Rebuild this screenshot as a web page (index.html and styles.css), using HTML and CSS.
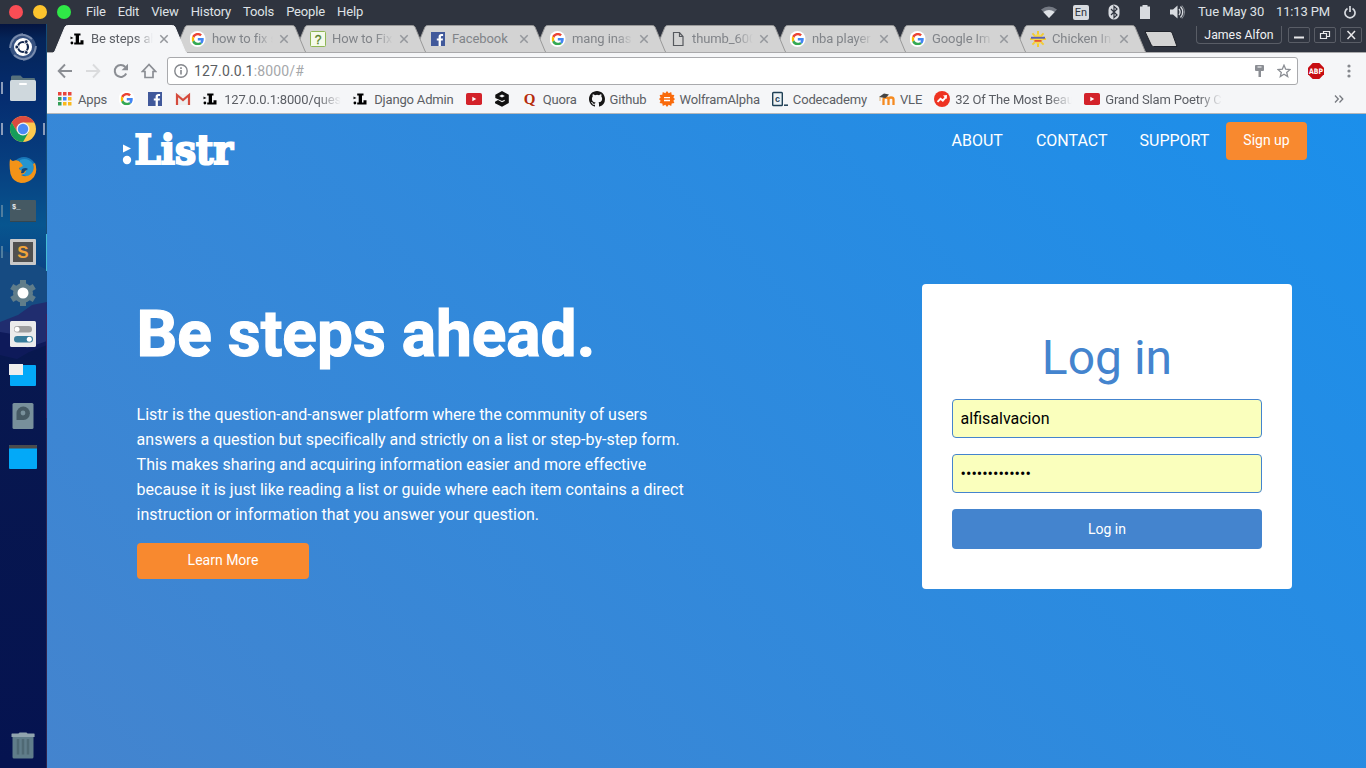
FILE: index.html
```html
<!DOCTYPE html>
<html lang="en">
<head>
<meta charset="utf-8">
<title>Be steps ahead</title>
<link rel="stylesheet" href="styles.css">
</head>
<body>
<svg class="defs" width="0" height="0">
  <symbol id="google" viewBox="0 0 48 48">
    <path fill="#EA4335" d="M24 9.5c3.54 0 6.71 1.22 9.21 3.6l6.85-6.85C35.9 2.38 30.47 0 24 0 14.62 0 6.51 5.38 2.56 13.22l7.98 6.19C12.43 13.72 17.74 9.5 24 9.5z"/>
    <path fill="#4285F4" d="M46.98 24.55c0-1.57-.15-3.09-.38-4.55H24v9.02h12.94c-.58 2.96-2.26 5.48-4.78 7.18l7.73 6c4.51-4.18 7.09-10.36 7.09-17.65z"/>
    <path fill="#FBBC05" d="M10.53 28.59c-.48-1.45-.76-2.99-.76-4.59s.27-3.14.76-4.59l-7.98-6.19C.92 16.46 0 20.12 0 24s.92 7.54 2.56 10.78l7.97-6.19z"/>
    <path fill="#34A853" d="M24 48c6.48 0 11.93-2.13 15.89-5.81l-7.73-6c-2.15 1.45-4.92 2.3-8.16 2.3-6.26 0-11.57-4.22-13.47-9.91l-7.98 6.19C6.51 42.62 14.62 48 24 48z"/>
  </symbol>
  <symbol id="googletab" viewBox="0 0 16 16"><circle cx="7.500" cy="8" r="8" fill="#fff"/><use href="#google" x="1.600" y="1.900" width="12.400" height="12.400"/></symbol>
  <symbol id="fb" viewBox="0 0 16 16"><rect x="1" y="1" width="14" height="14" fill="#41599b"/><path d="M8.600 15V9.600H6.800V7.500h1.800V5.900c0-2 1.100-2.900 2.800-2.900h1.700v2h-1.100c-.9 0-1.100.4-1.100 1.100v1.400h2.100l-.3 2.100h-1.800V15z" fill="#fff"/></symbol>
  <symbol id="lfav" viewBox="0 0 16 16"><path d="M.5 5.600l3 1.300-3 1.300z" fill="#111"/><circle cx="1.900" cy="12" r="1.400"/><path d="M4.200 2.500h6.300v2H9v7h1.500V9.300h3V13.500H4.200v-2h1.500v-7H4.200z"/></symbol>
  <symbol id="yt" viewBox="0 0 16 16"><rect x="0" y="2" width="16" height="12" rx="1.800" fill="#d3222a"/><path d="M6.300 5.800v4.400L10.300 8z" fill="#fff"/></symbol>
  <symbol id="tabshape" viewBox="0 0 134 28"><path d="M0 28C1 27.500 1.500 27 2 26L12 2Q12.800.5 14.500.5H119.500Q121.200.5 122 2L132 26Q132.700 27.500 134 28" stroke-width="1"/></symbol>
  <symbol id="close" viewBox="0 0 10 10"><path d="M1.300 1.300l7.400 7.400M8.700 1.300L1.300 8.700" stroke="#94979c" stroke-width="1.500" fill="none"/></symbol>
  <symbol id="sun" viewBox="0 0 16 16"><path d="M8 0v16M0 8h16M2.400 2.400l11.200 11.200M13.600 2.400L2.400 13.600" stroke="#f2cb35" stroke-width="2"/><circle cx="8" cy="8" r="4.800" fill="#f8d94a"/><rect x="1" y="5.800" width="14" height="1.900" fill="#5a5fb4"/><rect x="4.500" y="9" width="7" height="1.800" fill="#e35439"/></symbol>
</svg>

<header class="panel">
  <i class="dot red"></i><i class="dot yellow"></i><i class="dot green"></i>
  <nav class="menus"><span>File</span><span>Edit</span><span>View</span><span>History</span><span>Tools</span><span>People</span><span>Help</span></nav>
  <div class="tray">
    <svg class="wifi" width="16" height="12" viewBox="0 0 16 12"><path d="M0 3.500Q8-2.500 16 3.500L8 12z" fill="#747983"/><path d="M2.300 6Q8 2 13.700 6L8 12z" fill="#dfe2e6"/></svg>
    <span class="lang">En</span>
    <svg class="bt" width="12" height="16" viewBox="0 0 12 16"><rect x=".5" y=".5" width="11" height="15" rx="5.500" fill="#d8dbe0"/><path d="M3 5l6 6-3 2.700V2.300L9 5l-6 6" fill="none" stroke="#2f343f" stroke-width="1.200"/></svg>
    <svg class="bat" width="10" height="14" viewBox="0 0 10 14"><path d="M2.500 0h5v1.500H10V14H0V1.500h2.500z" fill="#d8dbe0"/></svg>
    <svg class="vol" width="16" height="14" viewBox="0 0 16 14"><path d="M0 4.500h3L7.500.5v13L3 9.500H0z" fill="#d8dbe0"/><path d="M9 4q2.200 3 0 6M10.500 1.500q4.500 5.500 0 11" fill="none" stroke="#d8dbe0" stroke-width="1.300"/><path d="M12 .5q5 6.500 0 13" fill="none" stroke="#878b93"/></svg>
    <span class="date">Tue May 30</span><span class="time">11:13 PM</span>
    <svg class="power" width="12" height="13" viewBox="0 0 12 13"><path d="M3.500 2.500a5 5 0 1 0 5 0M6 0v6" fill="none" stroke="#d8dbe0" stroke-width="1.700"/></svg>
  </div>
</header>

<div class="desktop">
  <aside class="launcher">
    <svg class="wallpaper" width="47" height="744" viewBox="0 0 47 744">
      <defs><linearGradient id="sky" x2="0" y2="1"><stop offset="0" stop-color="#041440"/><stop offset=".02" stop-color="#052458"/><stop offset=".1" stop-color="#052d70"/><stop offset=".19" stop-color="#073f80"/><stop offset=".27" stop-color="#07558f"/><stop offset=".34" stop-color="#0b4183"/><stop offset="1" stop-color="#0a2a6c"/></linearGradient>
      <linearGradient id="hill" x2="0" y2="1"><stop offset="0" stop-color="#08184f"/><stop offset="1" stop-color="#051350"/></linearGradient></defs>
      <path d="M0 0h47v744H0z" fill="url(#sky)"/>
      <path d="M0 226l20 5 27 15v60H0z" fill="#164b82"/>
      <path d="M0 298l18-7 14-10 15-3v60H0z" fill="#202d6f"/>
      <path d="M0 308l12 2 15 14 20-7v50H0z" fill="#0e1a5a"/>
      <path d="M0 331l17 4 12-7 18-7v423H0z" fill="url(#hill)"/>
      <path d="M46.500 0v210" stroke="#164d78"/><path d="M46.500 210v37" stroke="#45bdd4"/><path d="M46.500 290v104" stroke="#41205b"/><path d="M46.500 394v350" stroke="#2d234f"/>
    </svg>
    <div class="dock">
      <div class="app"><svg width="30" height="30" viewBox="0 0 30 30"><circle cx="15" cy="15" r="13" fill="#58719b" opacity=".6"/><path d="M2 16Q3 4 15 2M28 14q-1 12-13 14M6 6Q14-1 24 7M24 24q-8 7-18-1" stroke="#a6b4cd" stroke-width="2" fill="none" opacity=".6"/><circle cx="15" cy="15" r="9" fill="#fff"/><circle cx="15" cy="15" r="5" fill="none" stroke="#14284f" stroke-width="2.200"/><g fill="#14284f" stroke="#fff" stroke-width=".8"><circle cx="8.800" cy="15" r="1.900"/><circle cx="18.200" cy="9.600" r="1.900"/><circle cx="18.200" cy="20.400" r="1.900"/></g></svg></div>
      <div class="app run"><svg width="28" height="28" viewBox="0 0 28 28"><path d="M2 12V3q0-1.500 1.500-1.500h8L14 4h11q1 0 1 1v7z" fill="#57717c"/><rect x="1" y="6" width="26" height="21" rx="1.500" fill="#cfd8dd"/><rect x="10" y="9" width="8" height="2" rx="1" fill="#fff"/></svg></div>
      <div class="app run focus"><svg width="28" height="28" viewBox="0 0 28 28"><circle cx="14" cy="14" r="13" fill="#fcc94f"/><path d="M2.740 7.500A13 13 0 0 1 25.260 7.500H14L8.400 17.200z" fill="#db4b3f"/><path d="M2.740 7.500A13 13 0 0 0 14 27l5.600-9.700H8.400z" fill="#169d5a"/><circle cx="14" cy="14" r="6.500" fill="#f1f1f1"/><circle cx="14" cy="14" r="5.200" fill="#4c8af4"/></svg></div>
      <div class="app"><svg width="28" height="28" viewBox="0 0 28 28"><circle cx="15" cy="13" r="12" fill="#1976b8"/><path d="M11 4q8-3 13 4 2 9-5 13l-8-4z" fill="#2595cf"/><path d="M1 3q2 2 3 2 5-2 8 2l2 3-4 2q0 2 3 3l4-1q0 4-5 5 5 3 10-1 4-4 2-10l2-1q3 8-1 14-5 6-13 6Q4 26 1.500 18 0 10 1 3z" fill="#f39317"/><path d="M13 13q4-2 6 0l-3 2q-1 3-4 2z" fill="#164777"/></svg></div>
      <div class="app run dim"><svg width="28" height="28" viewBox="0 0 28 28"><rect x="1" y="3" width="26" height="22" rx="1" fill="#455963"/><path d="M1 24h26v1H1z" fill="#344650"/><text x="3" y="11.500" class="term">$_</text></svg></div>
      <div class="app run dim"><svg width="28" height="28" viewBox="0 0 28 28"><rect x="1" y="1" width="26" height="26" rx="1" fill="#c9c9c9"/><rect x="4" y="4" width="20" height="20" fill="#505050"/><text x="14" y="20" text-anchor="middle" class="subl">S</text></svg></div>
      <div class="app"><svg width="28" height="28" viewBox="0 0 28 28"><circle cx="14" cy="14" r="10" fill="#607d8a"/><path d="M14 1v26M2.700 7.500l22.600 13M2.700 20.500l22.600-13" stroke="#607d8a" stroke-width="6"/><circle cx="14" cy="14" r="5.500" fill="#fff"/></svg></div>
      <div class="app"><svg width="28" height="28" viewBox="0 0 28 28"><rect x="1" y="1" width="26" height="26" rx="1.500" fill="#ebebeb"/><rect x="5" y="6" width="18" height="6.500" rx="3.250" fill="#9e9e9e"/><circle cx="8" cy="9.200" r="2.500" fill="#fff"/><rect x="5" y="16" width="19" height="6.500" rx="3.250" fill="#377c9b"/><circle cx="20.300" cy="19.200" r="2.500" fill="#fff"/></svg></div>
      <div class="app"><svg width="28" height="28" viewBox="0 0 28 28"><rect x="1" y="4" width="26" height="21" rx="1" fill="#03a9f8"/><rect x="0" y="3" width="14" height="11" fill="#eee"/></svg></div>
      <div class="app"><svg width="28" height="28" viewBox="0 0 28 28"><rect x="3.500" y="1" width="21" height="26" rx="1.500" fill="#78909b"/><path d="M7.500 18v-7a6.700 6.700 0 1 1 7 7z" fill="#465a64"/><circle cx="14" cy="11" r="2.400" fill="#78909b"/></svg></div>
      <div class="app"><svg width="28" height="28" viewBox="0 0 28 28"><rect x="0" y="2" width="28" height="24" rx="1" fill="#03a9f8"/><path d="M0 5.500V3q0-1 1-1h26q1 0 1 1v2.500z" fill="#4b4b4b"/></svg></div>
    </div>
    <div class="app bin"><svg width="28" height="28" viewBox="0 0 28 28"><path d="M3.500 5h21v21q0 1.500-1.500 1.500H5Q3.500 27.500 3.500 26z" fill="#607d8a"/><path d="M9 8v15.500M14 8v15.500M19 8v15.500" stroke="#4f6974" stroke-width="2.500"/><path d="M2.500 6V3q0-.6.6-.6H9.500q.5-1 1.500-1h6q1 0 1.500 1h6.500q.6 0 .6.600v3z" fill="#90a4ae"/></svg></div>
  </aside>

  <main class="browser">
    <div class="tabstrip">
      <div class="tab active"><svg class="shape"><use href="#tabshape"/></svg><svg class="fav"><use href="#lfav"/></svg><span class="title">Be steps ah</span><svg class="x"><use href="#close"/></svg></div>
      <div class="tab"><svg class="shape"><use href="#tabshape"/></svg><svg class="fav"><use href="#googletab"/></svg><span class="title">how to fix s</span><svg class="x"><use href="#close"/></svg></div>
      <div class="tab"><svg class="shape"><use href="#tabshape"/></svg><svg class="fav" viewBox="0 0 16 16"><rect x=".5" y=".5" width="15" height="15" rx="1" fill="#f4faea" stroke="#8fb755"/><text x="8" y="12.500" text-anchor="middle" class="qm">?</text></svg><span class="title">How to Fix</span><svg class="x"><use href="#close"/></svg></div>
      <div class="tab"><svg class="shape"><use href="#tabshape"/></svg><svg class="fav"><use href="#fb"/></svg><span class="title">Facebook</span><svg class="x"><use href="#close"/></svg></div>
      <div class="tab"><svg class="shape"><use href="#tabshape"/></svg><svg class="fav"><use href="#googletab"/></svg><span class="title">mang inas</span><svg class="x"><use href="#close"/></svg></div>
      <div class="tab"><svg class="shape"><use href="#tabshape"/></svg><svg class="fav" viewBox="0 0 16 16"><path d="M3.500 1.500h6l3.500 4v9H3.500zM9.500 1.500v4H13" fill="none" stroke="#56595e" stroke-width="1.200"/></svg><span class="title">thumb_600</span><svg class="x"><use href="#close"/></svg></div>
      <div class="tab"><svg class="shape"><use href="#tabshape"/></svg><svg class="fav"><use href="#googletab"/></svg><span class="title">nba player</span><svg class="x"><use href="#close"/></svg></div>
      <div class="tab"><svg class="shape"><use href="#tabshape"/></svg><svg class="fav"><use href="#googletab"/></svg><span class="title">Google Im</span><svg class="x"><use href="#close"/></svg></div>
      <div class="tab"><svg class="shape"><use href="#tabshape"/></svg><svg class="fav"><use href="#sun"/></svg><span class="title">Chicken In</span><svg class="x"><use href="#close"/></svg></div>
      <svg class="newtab" width="34" height="16" viewBox="0 0 34 16"><path d="M1 .5h25q1.500 0 2.200 1.500l4.800 13.500H9.500Q8 15.500 7.300 14z" fill="#d3d3d3" stroke="#20232b"/></svg>
      <div class="wincontrols">
        <span class="user">James Alfon</span>
        <span class="wbtn"><svg width="20" height="14" viewBox="0 0 20 14"><path d="M5 9.500h10" stroke="#e8e8ea" stroke-width="2"/></svg></span>
        <span class="wbtn"><svg width="20" height="14" viewBox="0 0 20 14"><path d="M8.500 5.500V3.500h6v5h-2.500M5.500 5.500h6v5h-6z" fill="none" stroke="#e8e8ea" stroke-width="1.200"/></svg></span>
        <span class="wbtn"><svg width="20" height="14" viewBox="0 0 20 14"><path d="M6.500 3l7.500 8M14 3l-7.500 8" stroke="#e8e8ea" stroke-width="1.500"/></svg></span>
      </div>
    </div>

    <div class="toolbar">
      <svg class="tb back" viewBox="0 0 16 16"><path d="M15 8H2.500M8 1.500L1.700 8 8 14.500" fill="none" stroke="#8b8e94" stroke-width="1.900"/></svg>
      <svg class="tb fwd" viewBox="0 0 16 16"><path d="M1 8h12.500M8 1.500L14.300 8 8 14.500" fill="none" stroke="#dadbdd" stroke-width="1.900"/></svg>
      <svg class="tb reload" viewBox="0 0 16 16"><path d="M13.200 10.500A6 6 0 1 1 12.300 4" fill="none" stroke="#8b8e94" stroke-width="2"/><path d="M15 .8v6.400H8.600z" fill="#8b8e94"/></svg>
      <svg class="tb home" viewBox="0 0 16 16"><path d="M8 1.500L1.500 8.500H4v6h8v-6h2.500z" fill="none" stroke="#8b8e94" stroke-width="1.700"/></svg>
      <div class="omnibox">
        <svg width="14" height="14" viewBox="0 0 14 14"><circle cx="7" cy="7" r="6.200" fill="none" stroke="#84878c" stroke-width="1.400"/><path d="M7 6v4.500M7 3.300v1.600" stroke="#84878c" stroke-width="1.600"/></svg>
        <span class="url">127.0.0.1<em>:8000/#</em></span>
        <svg class="key" width="9" height="12" viewBox="0 0 9 12"><path d="M1 0h7q1 0 1 1v4q0 1-1 1H6v6H3.500V6H1Q0 6 0 5V1q0-1 1-1z" fill="#8b8e94"/><path d="M2.500 2h4" stroke="#fff"/></svg>
        <svg class="star" width="14" height="14" viewBox="0 0 14 14"><path d="M7 1.200l1.700 4 4.300.4-3.300 2.800 1 4.200L7 10.300l-3.700 2.300 1-4.200L1 5.600l4.300-.4z" fill="none" stroke="#8b8e94" stroke-width="1.300"/></svg>
      </div>
      <svg class="abp" width="16" height="16" viewBox="0 0 16 16"><path d="M4.700 0h6.600L16 4.700v6.600L11.300 16H4.700L0 11.300V4.700z" fill="#c70d12"/><text x="8" y="11" text-anchor="middle" textLength="14" lengthAdjust="spacingAndGlyphs" class="abpt">ABP</text></svg>
      <svg class="dots" width="4" height="14" viewBox="0 0 4 14" fill="#85888d"><circle cx="2" cy="2" r="1.600"/><circle cx="2" cy="7" r="1.600"/><circle cx="2" cy="12" r="1.600"/></svg>
    </div>

    <div class="bookmarks">
      <a><svg viewBox="0 0 16 16"><path d="M1 1h3.500v3.500H1zM6 1h3.500v3.500H6zM11 1h3.500v3.500H11z" fill="#e8453c"/><path d="M1 6h3.500v3.500H1z" fill="#349f58"/><path d="M6 6h3.500v3.500H6z" fill="#4285f4"/><path d="M11 6h3.500v3.500H11zM6 11h3.500v3.500H6zM11 11h3.500v3.500H11z" fill="#f9b81c"/><path d="M1 11h3.500v3.500H1z" fill="#349f58"/></svg><span>Apps</span></a>
      <a><svg viewBox="0 0 16 16"><use href="#googletab"/></svg></a>
      <a><svg><use href="#fb"/></svg></a>
      <a><svg viewBox="0 0 16 16"><path d="M1 3h14v11H1z" fill="#eee"/><path d="M2 14V4l6 5 6-5v10" fill="none" stroke="#d54b3d" stroke-width="2.200"/></svg></a>
      <a><svg><use href="#lfav"/></svg><span class="clip">127.0.0.1:8000/ques</span></a>
      <a><svg><use href="#lfav"/></svg><span>Django Admin</span></a>
      <a><svg><use href="#yt"/></svg></a>
      <a><svg viewBox="0 0 16 16"><path d="M8 0L14.800 3.800V12L8 15.700 1 12.300V10.800L4 9.100 8 11.300 10.700 9.900V8.700L8 9.900 1.300 6.900V3.800zM8 3.600L5.200 5 8 6.500 10.800 5z" fill="#111" fill-rule="evenodd"/></svg></a>
      <a><svg viewBox="0 0 16 16"><text x="7.500" y="13" text-anchor="middle" class="quora">Q</text></svg><span>Quora</span></a>
      <a><svg viewBox="0 0 16 16"><path fill="#161616" d="M8 0C3.580 0 0 3.580 0 8c0 3.540 2.290 6.530 5.470 7.590.4.070.55-.17.55-.38 0-.19-.01-.82-.01-1.490-2.010.37-2.530-.49-2.690-.94-.09-.23-.48-.94-.82-1.130-.28-.15-.68-.52-.01-.53.63-.01 1.080.58 1.230.82.72 1.210 1.870.87 2.330.66.07-.52.28-.87.51-1.070-1.780-.2-3.640-.89-3.640-3.950 0-.87.31-1.590.82-2.150-.08-.2-.36-1.020.08-2.120 0 0 .67-.21 2.200.82a7.420 7.420 0 0 1 4 0c1.530-1.040 2.200-.82 2.200-.82.44 1.100.16 1.920.08 2.120.51.56.82 1.270.82 2.150 0 3.070-1.870 3.750-3.650 3.950.29.25.54.73.54 1.480 0 1.070-.01 1.930-.01 2.200 0 .21.15.46.55.38A8.010 8.010 0 0 0 16 8c0-4.420-3.580-8-8-8z"/></svg><span>Github</span></a>
      <a><svg viewBox="0 0 16 16"><path d="M8 0l1.700 2.200L12.200 1l.5 2.800 2.700.3-1 2.400L16 8l-1.600 1.700 1 2.300-2.700.4-.5 2.600-2.500-1.200L8 16l-1.700-2.200L3.800 15l-.5-2.600-2.700-.4 1-2.300L0 8l1.600-1.500-1-2.400 2.700-.3L3.800 1l2.500 1.200z" fill="#f96a0b"/><path d="M5 6.700h6M5 9.500h6" stroke="#fff" stroke-width="1.300"/></svg><span>WolframAlpha</span></a>
      <a><svg viewBox="0 0 16 16"><rect x=".7" y="1.500" width="9.600" height="13" rx=".8" fill="#eef3f6" stroke="#1f4056" stroke-width="1.400"/><text x="5.500" y="11" text-anchor="middle" class="cc">c</text><path d="M12 14.200h4" stroke="#1f4056" stroke-width="1.500"/></svg><span>Codecademy</span></a>
      <a><svg viewBox="0 0 16 16"><path d="M4.500 14V8.500q0-2 2.500-2t2.500 2V14m0-5.500q0-2 2.500-2t2.500 2V14" fill="none" stroke="#f58a20" stroke-width="2.300"/><path d="M0 6l5-3.500 5 1L6.500 7z" fill="#444"/><path d="M1 6v4" stroke="#d8b177"/></svg><span>VLE</span></a>
      <a><svg viewBox="0 0 16 16"><circle cx="8" cy="8" r="8" fill="#ee3322"/><path d="M3.500 10.800l3-3 2.300 1.800 3-3.500" fill="none" stroke="#fff" stroke-width="1.900"/><path d="M9 4.500l4-.5-.3 4z" fill="#fff"/></svg><span class="clip">32 Of The Most Beau</span></a>
      <a><svg><use href="#yt"/></svg><span class="clip">Grand Slam Poetry C</span></a>
      <span class="more"><svg width="10" height="8" viewBox="0 0 10 8"><path d="M1 .5L4.300 4 1 7.500M5.500.5L8.800 4 5.500 7.500" fill="none" stroke="#777a80" stroke-width="1.300"/></svg></span>
    </div>

    <section class="page">
      <div class="nav">
        <svg class="logo" width="116" height="40" viewBox="0 0 116 40"><path d="M1 12.500l8 4-8 4z" fill="#fff"/><circle cx="5" cy="28" r="4.200" fill="#fff"/><text x="12.500" y="31.500" textLength="98.500" lengthAdjust="spacingAndGlyphs" class="logotext">Listr</text></svg>
        <div class="links"><a>ABOUT</a><a>CONTACT</a><a>SUPPORT</a><a class="signup">Sign up</a></div>
      </div>
      <div class="hero">
        <div class="intro">
          <h1>Be steps ahead.</h1>
          <p>Listr is the question-and-answer platform where the community of users answers a question but specifically and strictly on a list or step-by-step form. This makes sharing and acquiring information easier and more effective because it is just like reading a list or guide where each item contains a direct instruction or information that you answer your question.</p>
          <a class="learn">Learn More</a>
        </div>
        <form class="card">
          <h2>Log in</h2>
          <input type="text" value="alfisalvacion">
          <input type="password" value="abcdefghijklm">
          <button type="button">Log in</button>
        </form>
      </div>
    </section>
  </main>
</div>
</body>
</html>
```
FILE: styles.css
```css
* { box-sizing: border-box; }
body { margin: 0; width: 1366px; height: 768px; overflow: hidden; font-family: Roboto, "Liberation Sans", sans-serif; background: #2f343f; }
svg { display: block; flex: none; }
.defs { position: absolute; }

/* top panel */
.panel { height: 24px; display: flex; align-items: center; background: #2f343f; color: #dfe2e6; font-size: 13px; padding-left: 9px; }
.dot { width: 14px; height: 14px; border-radius: 50%; margin-right: 10px; }
.red { background: #f94d55; }
.yellow { background: #fdc42d; }
.green { background: #2fe847; }
.menus { display: flex; gap: 12px; padding: 0 0 1px 5px; letter-spacing: -.15px; }
.tray { margin-left: auto; display: flex; align-items: center; height: 24px; }
.wifi { margin-right: 1px; }
.lang { width: 16px; height: 15px; margin-left: 15px; border-radius: 2px; background: #d8dbe0; color: #2f343f; font-size: 11px; line-height: 16px; text-align: center; }
.bt { margin-left: 19px; }
.bat { margin-left: 20px; }
.vol { margin-left: 20px; }
.date { margin-left: 12px; width: 78px; white-space: nowrap; letter-spacing: -.05px; }
.time { width: 68px; white-space: nowrap; letter-spacing: -.15px; }
.date, .time { padding-bottom: 1px; }
.power { margin-right: 10px; }

.desktop { display: flex; height: 744px; }

/* launcher */
.launcher { width: 47px; height: 744px; position: relative; display: flex; flex-direction: column; justify-content: space-between; padding: 2px 0 3px; }
.wallpaper { position: absolute; left: 0; top: 0; }
.dock { display: flex; flex-direction: column; }
.app { position: relative; width: 46px; height: 41px; display: flex; align-items: center; justify-content: center; }
.run::before, .focus::after { content: ""; position: absolute; left: 1px; top: 15px; width: 2px; height: 12px; background: #8b9cba; }
.dim::before { background: #4f7d9f; }
.focus::after { left: 43px; }
.term { font: bold 7px "Liberation Mono", monospace; fill: #e6eaec; }
.subl { font: bold 17px "Liberation Sans", sans-serif; fill: #f2a43a; }

/* tabs */
.browser { flex: 1; min-width: 0; display: flex; flex-direction: column; background: #f5f6f8; }
.tabstrip { height: 29px; flex: none; display: flex; background: #2f343f; border-bottom: 1px solid #a9a9ab; padding: 1px 0 0 6px; }
.tab { position: relative; isolation: isolate; width: 134px; height: 27px; flex: none; margin-right: -14px; display: flex; align-items: center; overflow: hidden; padding: 0 0 0 17px; }
.shape { position: absolute; left: 0; top: 0; z-index: -1; width: 134px; height: 28px; fill: #d3d3d3; stroke: #999; overflow: visible; }
.tab.active { height: 29px; padding-bottom: 2px; z-index: 20; }
.active .shape { fill: #f5f6f8; stroke: #f5f6f8; }
.tab:nth-child(2) { z-index: 9; }
.tab:nth-child(3) { z-index: 8; }
.tab:nth-child(4) { z-index: 7; }
.tab:nth-child(5) { z-index: 6; }
.tab:nth-child(6) { z-index: 5; }
.tab:nth-child(7) { z-index: 4; }
.tab:nth-child(8) { z-index: 3; }
.tab:nth-child(9) { z-index: 2; }
.fav { width: 16px; height: 16px; }
.title { width: 61px; margin-left: 6px; font-size: 13px; letter-spacing: -.1px; color: #818489; white-space: nowrap; overflow: hidden; -webkit-mask-image: linear-gradient(90deg, #000 72%, transparent 100%); mask-image: linear-gradient(90deg, #000 72%, transparent 100%); }
.active .title { color: #5d6066; margin-left: 5px; width: 62px; }
.tab:nth-child(4) .title { mask-image: none; -webkit-mask-image: none; }
.x { width: 10px; height: 10px; margin-left: 6px; }
.qm { font: 12px "Liberation Sans", sans-serif; fill: #557f25; stroke: #557f25; stroke-width: .3px; }
.newtab { margin: 6px 0 0 11px; }
.wincontrols { margin-left: auto; padding: 1px 4px 0 0; display: flex; gap: 4px; }
.user { width: 86px; height: 18px; margin-right: 2px; border: 1px solid #595d66; border-top: 0; border-radius: 0 0 4px 4px; color: #f0f1f3; font-size: 12.3px; line-height: 18px; text-align: center; }
.wbtn { width: 22px; height: 16px; margin-top: 1px; border: 1px solid #595d66; border-radius: 2px; }

/* toolbar */
.toolbar { height: 36px; flex: none; display: flex; align-items: center; padding-left: 10px; }
.tb { width: 16px; height: 16px; margin-right: 12px; }
.home { margin-right: 10px; }
.omnibox { width: 1131px; height: 28px; flex: none; border: 1px solid #a9aaad; border-radius: 3px; background: #fff; display: flex; align-items: center; padding: 0 6px; }
.url { margin-left: 6px; font-size: 14px; letter-spacing: .15px; color: #5b5e63; flex: 1; }
.url em { font-style: normal; color: #a5a7aa; }
.star { margin-left: 13px; }
.abp { margin-left: 10px; }
.abpt { font: bold 7.5px "DejaVu Sans", sans-serif; fill: #fff; }
.dots { margin-left: 23px; }

/* bookmarks */
.bookmarks { height: 25px; flex: none; display: flex; align-items: center; gap: 12px; padding: 0 0 4px 10px; border-bottom: 1px solid #b5b7ba; font-size: 13px; letter-spacing: -.16px; color: #5b5e64; }
.bookmarks a { display: flex; align-items: center; gap: 5px; white-space: nowrap; }
.bookmarks a > svg { width: 16px; height: 16px; }
.clip { width: 117px; overflow: hidden; -webkit-mask-image: linear-gradient(90deg, #000 80%, transparent 100%); mask-image: linear-gradient(90deg, #000 80%, transparent 100%); }
.more { margin-left: auto; margin-right: 22px; }
.quora { font: bold 15px "Liberation Serif", serif; fill: #b52c0c; }
.cc { font: bold 9px "Liberation Sans", sans-serif; fill: #1f4056; }

/* page */
.page { flex: 1; color: #fff; background: linear-gradient(45deg, #4484ce, #1b8feb); }
.nav { display: flex; justify-content: space-between; padding: 8px 59px 0 75px; height: 170px; align-items: flex-start; }
.logo { margin-top: 10px; overflow: visible; }
.logotext { font: bold 41px "DejaVu Serif", serif; fill: #fff; stroke: #fff; stroke-width: 2.200px; }
.links { display: flex; font-size: 16px; line-height: 38px; }
.links a { margin-right: 33px; }
.links a:nth-child(2) { margin-right: 32px; }
.links a:nth-child(3) { margin-right: 16.600px; }
.links .signup { width: 81px; height: 38px; margin: 0; border-radius: 4px; background: #f8892f; font-size: 14px; line-height: 37px; text-align: center; }
.hero { display: flex; justify-content: space-between; padding: 0 74px 0 90px; }
.intro { width: 560px; }
h1 { margin: 13px 0 0 -.5px; font-size: 64px; font-weight: 700; line-height: 75px; white-space: nowrap; -webkit-text-stroke: 1.2px #fff; }
p { margin: 30px 0 0 -.4px; font-size: 16px; line-height: 25px; letter-spacing: -.006px; font-variant-ligatures: common-ligatures; }
.learn { display: block; width: 172px; height: 36px; margin-top: 16px; border-radius: 4px; background: #f8892f; font-size: 14px; line-height: 35px; text-align: center; }
.card { width: 370px; height: 305px; background: #fff; border-radius: 4px; padding: 46px 30px 0; display: flex; flex-direction: column; }
h2 { margin: 0 0 13px; font-size: 48px; font-weight: 400; line-height: 56px; color: #4484ce; text-align: center; }
input { height: 39px; margin: 0 0 16px; border: 1px solid #4484ce; border-radius: 4px; background: #faffbd; padding: 0 7.600px; font-family: Roboto, sans-serif; font-size: 16px; color: #000; outline: 0; }
button { height: 40px; border: 0; border-radius: 4px; background: #4484ce; color: #fff; font-family: Roboto, sans-serif; font-size: 14px; }
```
